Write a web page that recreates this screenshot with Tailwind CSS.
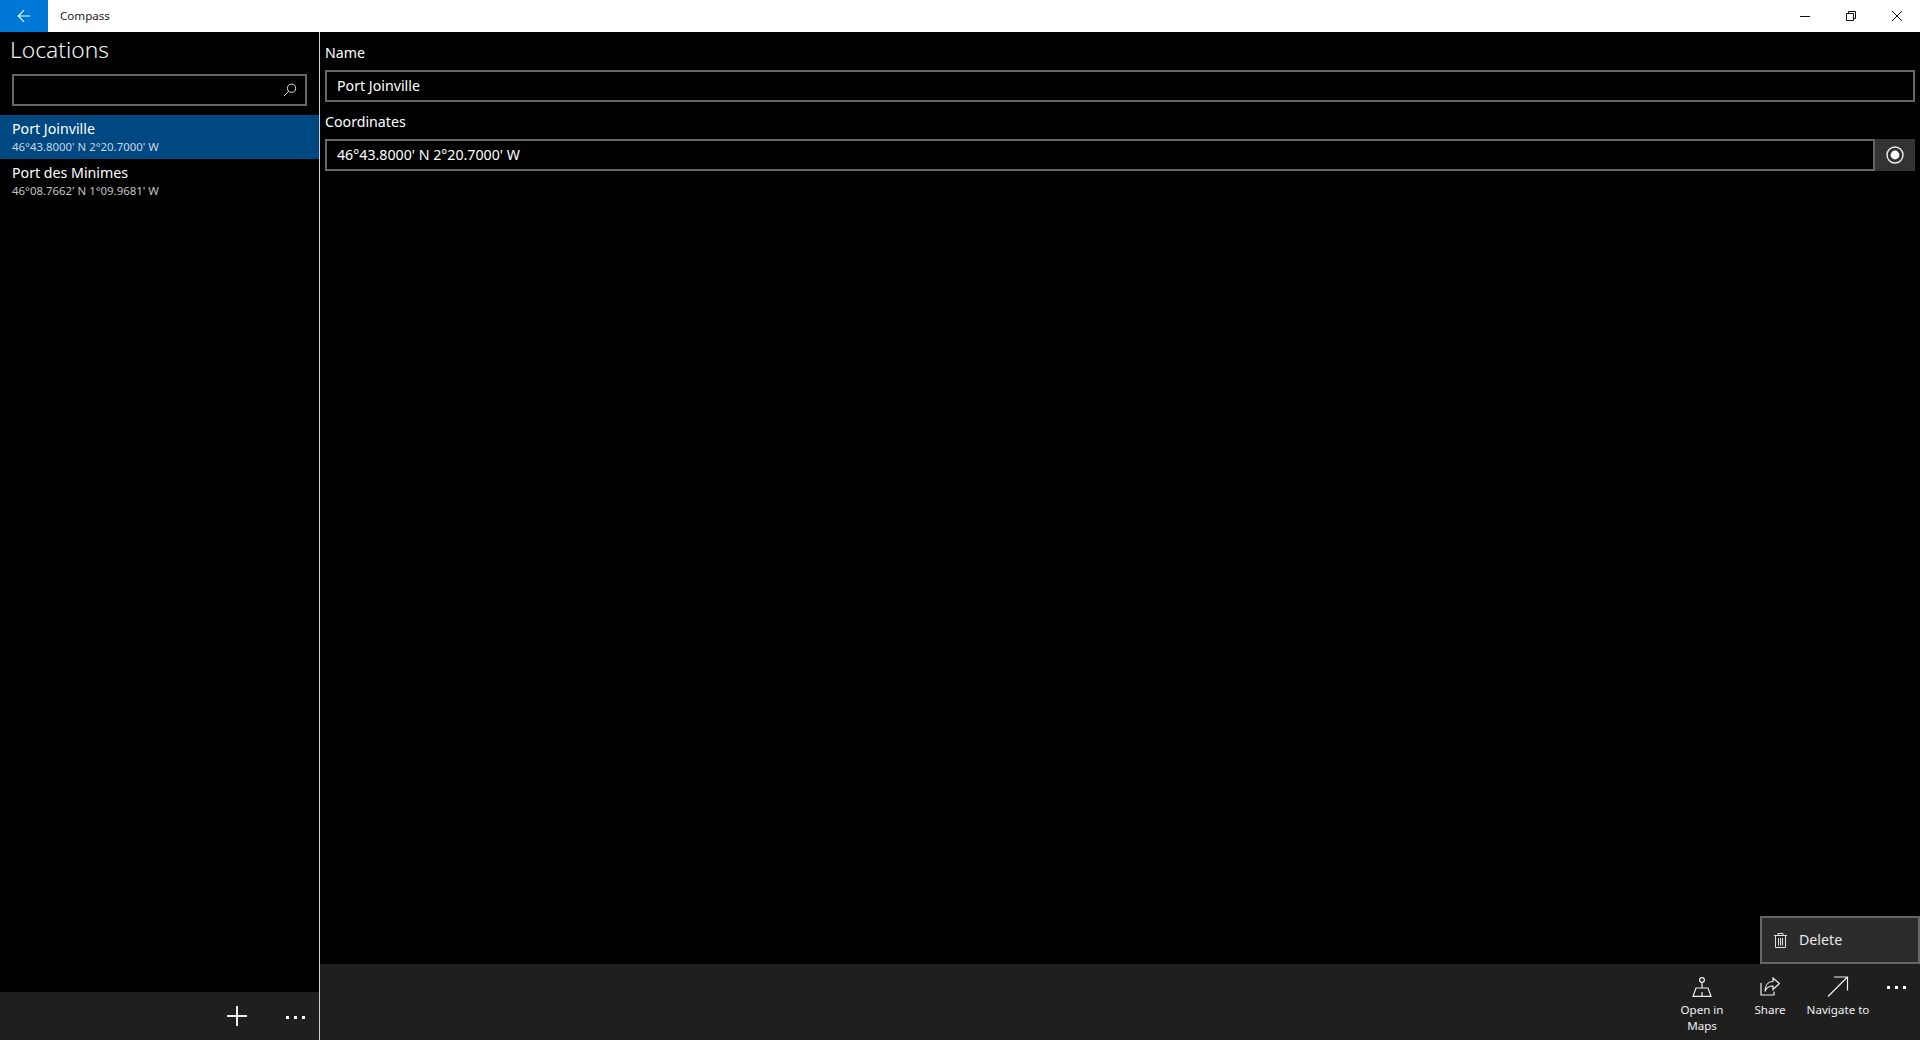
<!DOCTYPE html>
<html lang="en">
<head>
    <meta charset="UTF-8">
    <title>Compass</title>
    <script src="https://cdn.jsdelivr.net/npm/@tailwindcss/browser@4"></script>
</head>
<body class="bg-black text-white font-['Noto_Sans',sans-serif] overflow-hidden h-[1040px]">
<div class="relative w-[1920px] h-[1040px] flex flex-col">

    <!-- title bar -->
    <div class="h-8 bg-white text-black flex items-center shrink-0">
        <div class="w-12 h-8 bg-[#0078d7] flex items-center justify-center">
            <svg width="14" height="14" viewBox="0 0 14 14" fill="none" stroke="#fff" stroke-width="1.1"><path d="M13 7H1.500M7 1.200 1.200 7 7 12.800"/></svg>
        </div>
        <span class="ml-3 text-[11.6px] leading-none text-[#222]">Compass</span>
        <div class="ml-auto flex h-8">
            <div class="w-[46px] flex items-center justify-center">
                <svg width="10" height="10" viewBox="0 0 10 10" stroke="#111" fill="none"><path d="M0 5.500H10"/></svg>
            </div>
            <div class="w-[46px] flex items-center justify-center">
                <svg width="10" height="10" viewBox="0 0 10 10" stroke="#111" fill="none"><path d="M.5 2.500h7v7h-7zM2.500 2.500v-2h7v7h-2"/></svg>
            </div>
            <div class="w-[46px] flex items-center justify-center">
                <svg width="10" height="10" viewBox="0 0 10 10" stroke="#111" fill="none"><path d="M0 0 10 10M10 0 0 10"/></svg>
            </div>
        </div>
    </div>

    <div class="flex flex-1 min-h-0">
        <!-- locations pane -->
        <div class="w-[320px] shrink-0 border-r border-[#d0d0d0] flex flex-col">
            <h1 class="pl-[10px] h-[34px] text-[22.8px] font-light leading-[35px] text-[#f2f2f2]">Locations</h1>
            <div class="mx-3 mt-2 h-8 w-[295px] border-2 border-[#666] flex items-center justify-end pr-2">
                <svg width="14" height="14" viewBox="0 0 14 14" fill="none" stroke="#ddd" stroke-width="1"><circle cx="8.600" cy="5.200" r="4.100"/><path d="M5.700 8.200 1 13"/></svg>
            </div>
            <ul class="mt-[9px] flex-1">
                <li class="h-11 bg-[#004881] pl-3 pt-[4px]">
                    <div class="text-[14.2px] leading-[20px]">Port Joinville</div>
                    <div class="text-[11.4px] leading-[16px] text-[#c9d6e2]">46°43.8000' N 2°20.7000' W</div>
                </li>
                <li class="h-11 pl-3 pt-[4px]">
                    <div class="text-[14.2px] leading-[20px]">Port des Minimes</div>
                    <div class="text-[11.4px] leading-[16px] text-[#c4c4c4]">46°08.7662' N 1°09.9681' W</div>
                </li>
            </ul>
            <div class="h-12 bg-[#1f1f1f] flex justify-end shrink-0">
                <div class="w-[68px] flex items-center justify-center">
                    <svg width="20" height="20" viewBox="0 0 20 20" stroke="#eee" stroke-width="2"><path d="M10 0V20M0 10H20"/></svg>
                </div>
                <div class="w-12 flex items-center justify-center gap-[5px] pt-[2px]">
                    <span class="w-[3px] h-[3px] bg-white"></span>
                    <span class="w-[3px] h-[3px] bg-white"></span>
                    <span class="w-[3px] h-[3px] bg-white"></span>
                </div>
            </div>
        </div>

        <!-- detail pane -->
        <div class="flex-1 flex flex-col min-w-0">
            <div class="flex-1 pl-[5px] pr-[5px]">
                <label class="block h-[38px] pt-[11px] text-[14.2px] leading-[20px]">Name</label>
                <div class="h-8 border-2 border-[#666] pl-[10px] flex items-center text-[14.2px]">Port Joinville</div>
                <label class="block h-[37px] pt-[10px] text-[14.2px] leading-[20px]">Coordinates</label>
                <div class="flex h-8">
                    <div class="flex-1 border-2 border-[#666] pl-[10px] flex items-center text-[14.2px]">46°43.8000' N 2°20.7000' W</div>
                    <div class="w-10 bg-[#333] flex items-center justify-center">
                        <svg width="18" height="18" viewBox="0 0 18 18" fill="none"><circle cx="9" cy="9" r="8" stroke="#eee" stroke-width="1.400"/><circle cx="9" cy="9" r="4.400" fill="#fff"/></svg>
                    </div>
                </div>
            </div>
            <div class="h-[76px] bg-[#1f1f1f] flex justify-end shrink-0 text-[11.6px] leading-[16px] text-[#f0f0f0] text-center">
                <div class="w-[68px] pt-[13px]">
                    <svg class="mx-auto" width="20" height="20" viewBox="0 0 20 20" fill="none" stroke="#eee" stroke-width="1.200"><circle cx="10" cy="3" r="2.400"/><path d="M10 5.500V11M1 19.400 4 11H16L19 19.400ZM10 15V19"/></svg>
                    <div class="mt-[5px]">Open in<br>Maps</div>
                </div>
                <div class="w-[68px] pt-[13px]">
                    <svg class="mx-auto" width="20" height="20" viewBox="0 0 20 20" fill="none" stroke="#eee" stroke-width="1.200"><path d="M13 1 19.400 6.500 13 12.500V9C9 9 6.500 10.500 5 14.500 5 8.500 8 4.500 13 4.500ZM1 6V18H14V14.500"/></svg>
                    <div class="mt-[5px]">Share</div>
                </div>
                <div class="w-[68px] pt-[12px]">
                    <svg class="mx-auto" width="22" height="21" viewBox="0 0 22 20" fill="none" stroke="#eee" stroke-width="1.200"><path d="M1 20 20.500 .500M7 .500H20.500V14"/></svg>
                    <div class="mt-[5px] whitespace-nowrap">Navigate to</div>
                </div>
                <div class="w-12 pt-[22px] flex justify-center gap-[5px] h-fit">
                    <span class="w-[3px] h-[3px] bg-white"></span>
                    <span class="w-[3px] h-[3px] bg-white"></span>
                    <span class="w-[3px] h-[3px] bg-white"></span>
                </div>
            </div>
        </div>
    </div>

    <!-- overflow menu -->
    <div class="absolute right-0 bottom-[76px] w-40 h-12 bg-[#2b2b2b] border-2 border-[#666] flex items-center text-[14.2px] text-[#e8e8e8]">
        <svg class="ml-[12px]" width="13" height="15" viewBox="0 0 13 15" fill="none" stroke="#e0e0e0"><path d="M0 2.500H13M4 2.500V.5H9V2.500M1.500 2.500V14.500H11.500V2.500M4.500 5V12.500M6.500 5V12.500M8.500 5V12.500"/></svg>
        <span class="ml-[12px]">Delete</span>
    </div>
</div>
</body>
</html>
